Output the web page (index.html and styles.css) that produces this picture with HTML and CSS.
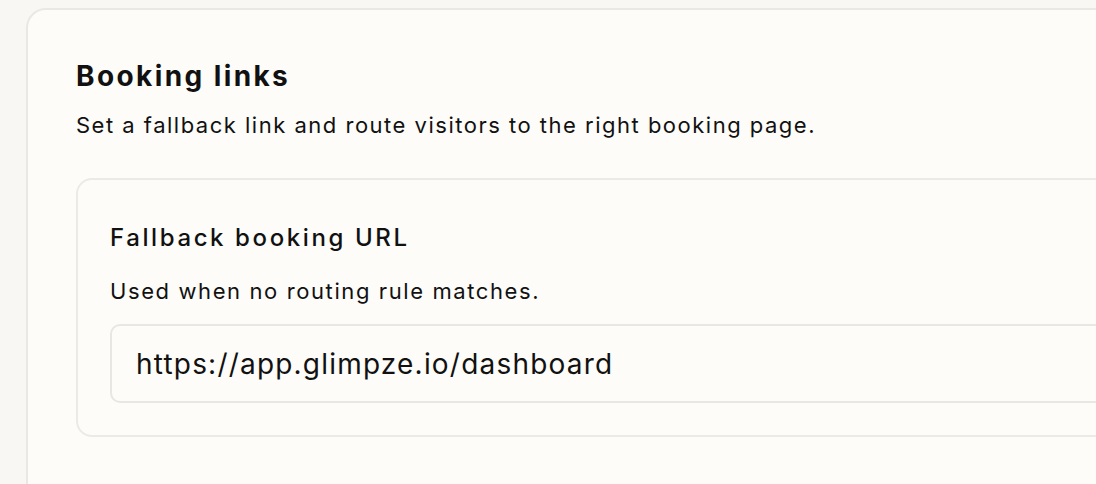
FILE: index.html
```html
<!DOCTYPE html>
<html lang="en">
<head>
    <meta charset="UTF-8">
    <meta name="viewport" content="width=device-width, initial-scale=1.0">
    <title>Booking links</title>
    <link rel="stylesheet" href="styles.css">
</head>
<body>
    <div class="panel">
        <h1>Booking links</h1>
        <p class="lead">Set a fallback link and route visitors to the right booking page.</p>

        <div class="card">
            <h2>Fallback booking URL</h2>
            <label for="fallbackUrl">Used when no routing rule matches.</label>
            <input type="text" id="fallbackUrl" name="fallbackUrl" value="https://app.glimpze.io/dashboard">
        </div>
    </div>
</body>
</html>
```

FILE: styles.css
```css
body {
    font-family: Inter, "Noto Sans", sans-serif;
    margin: 0;
    padding: 8px 0 0 26px;
    background: #f8f7f4;
    color: #111;
    overflow: hidden;
}
.panel {
    width: 1200px;
    min-height: 600px;
    background: #fdfcf9;
    border: 2px solid #e9e8e5;
    border-radius: 20px;
    padding: 48px 48px;
}
h1 {
    font-size: 28px;
    font-weight: 700;
    line-height: 36px;
    letter-spacing: 2.4px;
    margin: 0;
}
.lead {
    font-size: 22px;
    line-height: 30px;
    letter-spacing: 1.5px;
    margin: 16px 0 0;
}
.card {
    margin-top: 38px;
    border: 2px solid #ebeae7;
    border-radius: 16px;
    padding: 42px 32px 32px;
}
h2 {
    font-size: 24px;
    font-weight: 500;
    line-height: 32px;
    letter-spacing: 2.6px;
    margin: 0;
}
label {
    display: block;
    font-size: 22px;
    line-height: 30px;
    letter-spacing: 1.6px;
    margin-top: 22px;
}
input[type="text"] {
    display: block;
    box-sizing: border-box;
    width: 100%;
    height: 79px;
    margin-top: 18px;
    padding: 0 24px;
    font-family: inherit;
    font-size: 28px;
    letter-spacing: 1.2px;
    color: #111;
    background: #fdfcf9;
    border: 2px solid #e8e7e4;
    border-radius: 10px;
    outline: none;
}
```
